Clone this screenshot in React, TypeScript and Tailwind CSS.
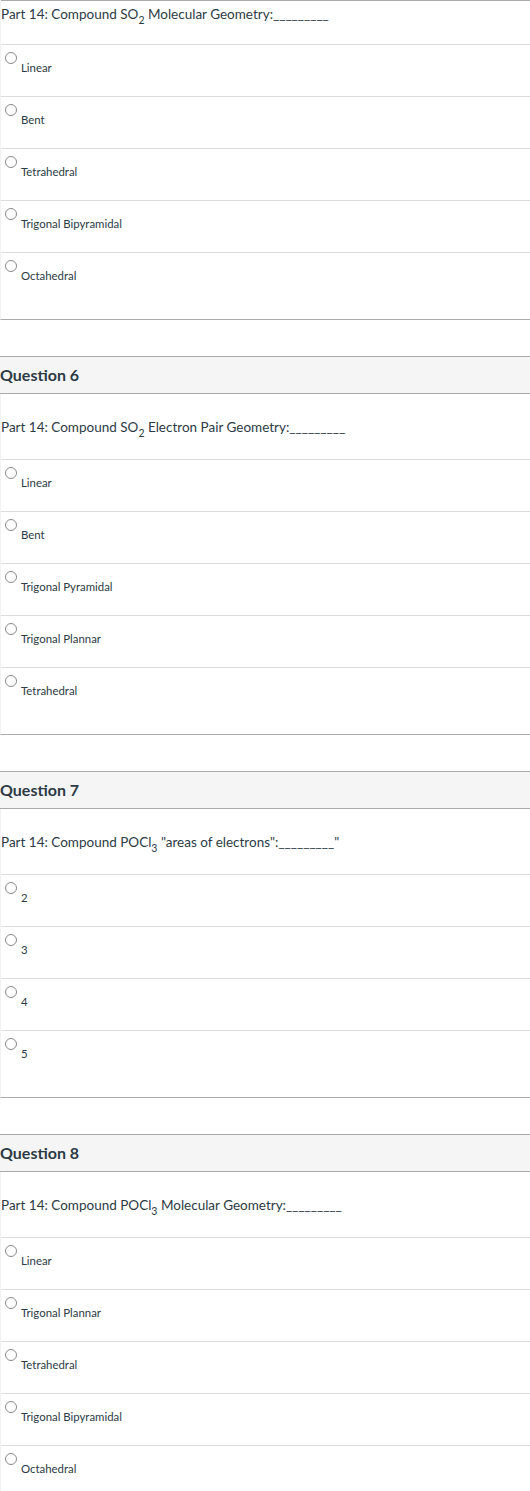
import React from 'react';

type Question = {
  title?: string;
  prompt: React.ReactNode;
  answers: string[];
};

const sub = (n: string) => <sub className="text-[10.5px] align-[-2px] leading-none">{n}</sub>;

const questions: Question[] = [
  {
    prompt: <>Part 14: Compound SO{sub('2')} Molecular Geometry:_________</>,
    answers: ['Linear', 'Bent', 'Tetrahedral', 'Trigonal Bipyramidal', 'Octahedral'],
  },
  {
    title: 'Question 6',
    prompt: <>Part 14: Compound SO{sub('2')} Electron Pair Geometry:_________</>,
    answers: ['Linear', 'Bent', 'Trigonal Pyramidal', 'Trigonal Plannar', 'Tetrahedral'],
  },
  {
    title: 'Question 7',
    prompt: <>Part 14: Compound POCl{sub('3')} "areas of electrons":_________"</>,
    answers: ['2', '3', '4', '5'],
  },
  {
    title: 'Question 8',
    prompt: <>Part 14: Compound POCl{sub('3')} Molecular Geometry:_________</>,
    answers: ['Linear', 'Trigonal Plannar', 'Tetrahedral', 'Trigonal Bipyramidal', 'Octahedral'],
  },
];

const Answer = ({ label, last }: { label: string; last: boolean }) => (
  <div className={`flex border-t border-[#dddddd] ${last ? 'h-[67px]' : 'h-[52px]'}`}>
    <div className="ml-[4px] mt-[7px] w-[12px] h-[12px] shrink-0 rounded-full border border-[#8a8a8a] bg-white" />
    <span className="ml-[4px] mt-[15px] text-[11.4px] leading-[16px] text-[#2d3b45]">{label}</span>
  </div>
);

const QuestionBlock = ({ q, first }: { q: Question; first: boolean }) => (
  <div className={first ? '' : 'mt-[36px]'}>
    {q.title && (
      <div className="h-[38px] flex items-center border-y border-[#aaaaaa] bg-[#f5f5f5]">
        <h2 className="text-[16px] font-bold text-[#2d3b45] leading-none">{q.title}</h2>
      </div>
    )}
    <div className="border-l border-[#f2f2f2] border-b border-b-[#aaaaaa]">
      <div
        className={`overflow-hidden text-[13.5px] leading-[20px] text-[#2d3b45] ${
          first ? 'h-[44px] pt-[3px] border-t border-[#aaaaaa]' : 'h-[65px] pt-[23px]'
        }`}
      >
        {q.prompt}
      </div>
      {q.answers.map((a, i) => (
        <Answer key={a} label={a} last={i === q.answers.length - 1} />
      ))}
    </div>
  </div>
);

export default function App() {
  return (
    <div className="w-[530px] h-[1491px] overflow-hidden bg-white" style={{ fontFamily: 'Lato, "Noto Sans", sans-serif' }}>
      {questions.map((q, i) => (
        <QuestionBlock key={i} q={q} first={i === 0} />
      ))}
    </div>
  );
}
